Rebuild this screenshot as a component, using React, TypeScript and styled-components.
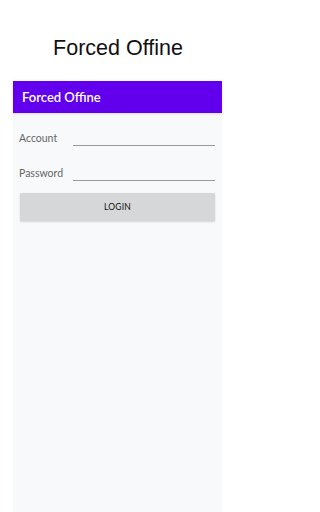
import React from 'react';
import styled, { createGlobalStyle } from 'styled-components';

const GlobalStyle = createGlobalStyle`
  html, body {
    margin: 0;
    padding: 0;
    background: #ffffff;
  }
  * {
    box-sizing: border-box;
  }
`;

const Page = styled.div`
  width: 236px;
  height: 512px;
  display: flex;
  flex-direction: column;
  overflow: hidden;
`;

const TitleBar = styled.div`
  height: 81px;
  display: flex;
  align-items: center;
  justify-content: center;
  padding-top: 16px;
`;

const Title = styled.h1`
  margin: 0;
  font-family: 'Liberation Sans', Arial, sans-serif;
  font-weight: 400;
  font-size: 21.5px;
  color: #111111;
`;

const Device = styled.div`
  flex: 1;
  margin: 0 14px 0 13px;
  background: #f8f9fb;
  display: flex;
  flex-direction: column;
`;

const AppBar = styled.div`
  height: 32px;
  background: #6200ee;
  display: flex;
  align-items: center;
  padding-left: 9px;
  font-family: Lato, 'Open Sans', sans-serif;
  font-weight: 600;
  font-size: 13px;
  color: #ffffff;
  box-shadow: 0 1px 2px rgba(0, 0, 0, 0.12);
`;

const Form = styled.div`
  display: flex;
  flex-direction: column;
  padding: 8px 7px 0 6px;
`;

const Field = styled.label`
  display: flex;
  align-items: flex-end;
  height: 25px;
  margin-bottom: 10px;
`;

const FieldLabel = styled.span`
  width: 54px;
  flex-shrink: 0;
  font-family: Lato, 'Open Sans', sans-serif;
  font-size: 10.5px;
  line-height: 12px;
  color: #666666;
  padding-bottom: 2px;
`;

const Input = styled.input`
  flex: 1;
  min-width: 0;
  height: 20px;
  border: none;
  border-bottom: 1px solid #9a9a9a;
  background: transparent;
  outline: none;
  padding: 0 2px;
  font-family: Lato, sans-serif;
  font-size: 10px;
`;

const Button = styled.button`
  margin: 2px 0 0 1px;
  height: 28px;
  border: none;
  border-radius: 1px;
  background: #d6d7d8;
  box-shadow: 0 1px 2px rgba(0, 0, 0, 0.15);
  font-family: Lato, 'Open Sans', sans-serif;
  font-weight: 400;
  font-size: 8.5px;
  color: #111111;
  letter-spacing: 0.2px;
`;

export default function App() {
  return (
    <>
      <GlobalStyle />
      <Page>
        <TitleBar>
          <Title>Forced Offine</Title>
        </TitleBar>
        <Device>
          <AppBar>Forced Offine</AppBar>
          <Form>
            <Field>
              <FieldLabel>Account</FieldLabel>
              <Input type="text" />
            </Field>
            <Field>
              <FieldLabel>Password</FieldLabel>
              <Input type="password" />
            </Field>
            <Button>LOGIN</Button>
          </Form>
        </Device>
      </Page>
    </>
  );
}
